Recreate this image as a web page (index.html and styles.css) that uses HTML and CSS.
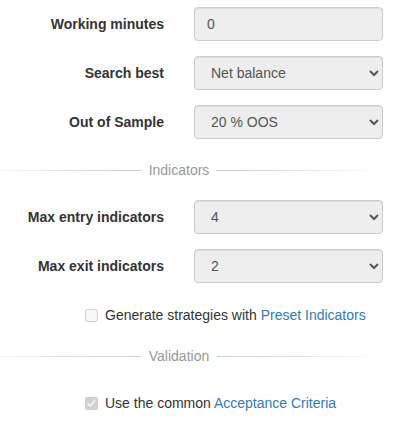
FILE: index.html
```html
<!DOCTYPE html>
<html lang="en">

<head>
    <meta charset="UTF-8">
    <meta name="viewport" content="width=device-width, initial-scale=1.0">
    <title>Generator settings</title>
    <link rel="stylesheet" href="styles.css">
</head>

<body>
    <div class="settings">
        <div class="form-group">
            <label class="form-label" for="workingMinutes">Working minutes</label>
            <div class="form-field">
                <input type="text" id="workingMinutes" class="form-control" value="0" readonly>
            </div>
        </div>

        <div class="form-group">
            <label class="form-label" for="searchBest">Search best</label>
            <div class="form-field">
                <select id="searchBest" class="form-control">
                    <option>Net balance</option>
                </select>
            </div>
        </div>

        <div class="form-group">
            <label class="form-label" for="outOfSample">Out of Sample</label>
            <div class="form-field">
                <select id="outOfSample" class="form-control">
                    <option>20 % OOS</option>
                </select>
            </div>
        </div>

        <div class="divider divider-indicators">
            <span class="divider-line divider-line-left"></span>
            <span class="divider-text">Indicators</span>
            <span class="divider-line divider-line-right"></span>
        </div>

        <div class="form-group">
            <label class="form-label" for="maxEntry">Max entry indicators</label>
            <div class="form-field">
                <select id="maxEntry" class="form-control">
                    <option>4</option>
                </select>
            </div>
        </div>

        <div class="form-group">
            <label class="form-label" for="maxExit">Max exit indicators</label>
            <div class="form-field">
                <select id="maxExit" class="form-control">
                    <option>2</option>
                </select>
            </div>
        </div>

        <label class="checkbox checkbox-preset">
            <input type="checkbox" disabled>
            <span>Generate strategies with <a href="#">Preset Indicators</a></span>
        </label>

        <div class="divider divider-validation">
            <span class="divider-line divider-line-left"></span>
            <span class="divider-text">Validation</span>
            <span class="divider-line divider-line-right"></span>
        </div>

        <label class="checkbox checkbox-acceptance">
            <input type="checkbox" checked disabled>
            <span>Use the common <a href="#">Acceptance Criteria</a></span>
        </label>
    </div>
</body>

</html>
```

FILE: styles.css
```css
body {
    font-family: "Liberation Sans", Arial, sans-serif;
    font-size: 14px;
    line-height: 20px;
    color: #333;
    background-color: #fff;
    margin: 0;
    padding: 7px 0 0 0;
}

.settings {
    padding-right: 11px;
}

.form-group {
    display: grid;
    grid-template-columns: 179px 1fr;
    margin-bottom: 15px;
}

.form-label {
    padding: 7px 15px 0 0;
    text-align: right;
    font-weight: bold;
}

.form-field {
    padding-left: 15px;
}

.form-control {
    display: block;
    width: 100%;
    height: 34px;
    box-sizing: border-box;
    padding: 6px 12px;
    font-family: inherit;
    font-size: 14px;
    line-height: 20px;
    color: #555;
    background-color: #eee;
    border: 1px solid #ccc;
    border-radius: 4px;
    box-shadow: inset 0 1px 1px rgba(0, 0, 0, 0.075);
    margin: 0;
    outline: none;
}

.divider {
    display: flex;
    align-items: center;
    margin-left: -25px;
    color: #999;
}

.divider-indicators {
    margin-top: 21px;
    margin-bottom: 20px;
}

.divider-validation {
    margin-top: 21px;
    margin-bottom: 27px;
}

.divider-line {
    flex: 1;
    height: 1px;
}

.divider-line-left {
    background: linear-gradient(to right, rgba(204, 204, 204, 0), #ccc);
}

.divider-line-right {
    background: linear-gradient(to left, rgba(204, 204, 204, 0), #ccc);
}

.divider-text {
    padding: 0 8px;
}

.checkbox {
    display: flex;
    align-items: center;
    padding-left: 85px;
}

.checkbox-preset {
    margin-top: 22px;
}

.checkbox input {
    width: 13px;
    height: 13px;
    margin: 0 7px 0 0;
}

a {
    color: #337ab7;
    text-decoration: none;
}
```
